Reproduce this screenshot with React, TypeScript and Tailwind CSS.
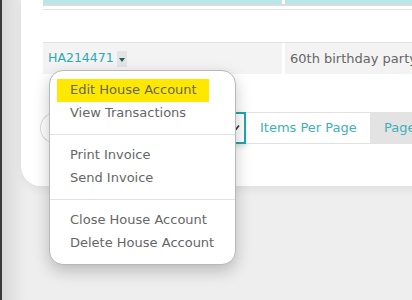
import { useState } from 'react';

const menuGroups = [
  ['Edit House Account', 'View Transactions'],
  ['Print Invoice', 'Send Invoice'],
  ['Close House Account', 'Delete House Account'],
];

function ActionMenu() {
  const [active] = useState('Edit House Account');

  return (
    <div className="absolute left-[49px] top-[70px] w-[187px] rounded-[14px] border border-[#b8b8b8] bg-white shadow-[0_6px_16px_rgba(0,0,0,0.22)]">
      {menuGroups.map((group, i) => (
        <div
          key={i}
          className={`flex flex-col ${i > 0 ? 'border-t border-[#e2e2e2]' : ''} ${i === 0 ? 'pt-[8px] pb-[9px]' : 'py-[9px]'}`}
        >
          {group.map((item) => (
            <div
              key={item}
              className={`mx-[7px] h-[23px] pl-[13px] leading-[22px] text-[13px] text-[#666] ${item === active ? 'bg-[#ffe800] text-[#444] w-[152px]' : ''}`}
            >
              {item}
            </div>
          ))}
        </div>
      ))}
    </div>
  );
}

export default function App() {
  return (
    <div className="relative h-[300px] w-[412px] overflow-hidden bg-[#eeeeee] font-['DejaVu_Sans',sans-serif]">
      <div className="absolute left-0 top-0 h-full w-[2px] bg-[#3a3a3a]" />
      <div className="absolute left-[2px] top-0 h-full w-[24px] bg-gradient-to-r from-[#d9d9d9] to-[#eeeeee]" />

      <div className="relative ml-[21px] h-[186px] w-[420px] rounded-bl-[20px] bg-white pl-[22px] shadow-[0_4px_10px_rgba(0,0,0,0.06)]">
        {/* header */}
        <div className="flex gap-[3px]">
          <div className="h-[4px] w-[239px] bg-[#b9e6e8]" />
          <div className="h-[4px] flex-1 bg-[#b9e6e8]" />
        </div>
        <div className="h-[2px] bg-[#dcdcdc]" />
        <div className="mt-[3px] h-px bg-[#e2e2e2]" />

        {/* row */}
        <div className="mt-[32px] flex gap-[3px] border-t border-[#e2e2e2]">
          <div className="flex h-[31px] w-[239px] items-center bg-[#f3f3f3] pl-[5px]">
            <span className="text-[12.5px] text-[#2aaab4]">HA214471</span>
            <span className="ml-[3px] flex h-[16px] w-[10px] items-center justify-center bg-[#e4e4e4]">
              <span className="mt-[2px] h-0 w-0 border-l-[3.5px] border-r-[3.5px] border-t-[4px] border-l-transparent border-r-transparent border-t-[#1f5e63]" />
            </span>
          </div>
          <div className="flex h-[31px] flex-1 items-center bg-[#f3f3f3] pl-[5px] text-[13px] text-[#666]">
            60th birthday party
          </div>
        </div>

        {/* pagination */}
        <div className="ml-[-3px] mt-[38px] flex h-[32px] items-stretch">
          <div className="w-[30px] rounded-l-full border border-r-0 border-[#dcdcdc]" />
          <div className="flex w-[176px] items-center justify-end border-2 border-[#1ea5ad] pr-[4px] shadow-[0_2px_6px_rgba(0,0,0,0.15)]">
            <svg width="8" height="8" viewBox="0 0 8 8">
              <path d="M1 4.5 L3 6.5 L7 1.5" stroke="#333" strokeWidth="1.6" fill="none" />
            </svg>
          </div>
          <div className="flex w-[125px] items-center border border-l-0 border-[#e2e2e2] bg-white pl-[14px] text-[13px] text-[#3fb0b8]">
            Items Per Page
          </div>
          <div className="flex flex-1 items-center bg-[#e3e3e3] pl-[13px] text-[13px] text-[#3fb0b8]">
            Page
          </div>
        </div>
      </div>

      <ActionMenu />
    </div>
  );
}
